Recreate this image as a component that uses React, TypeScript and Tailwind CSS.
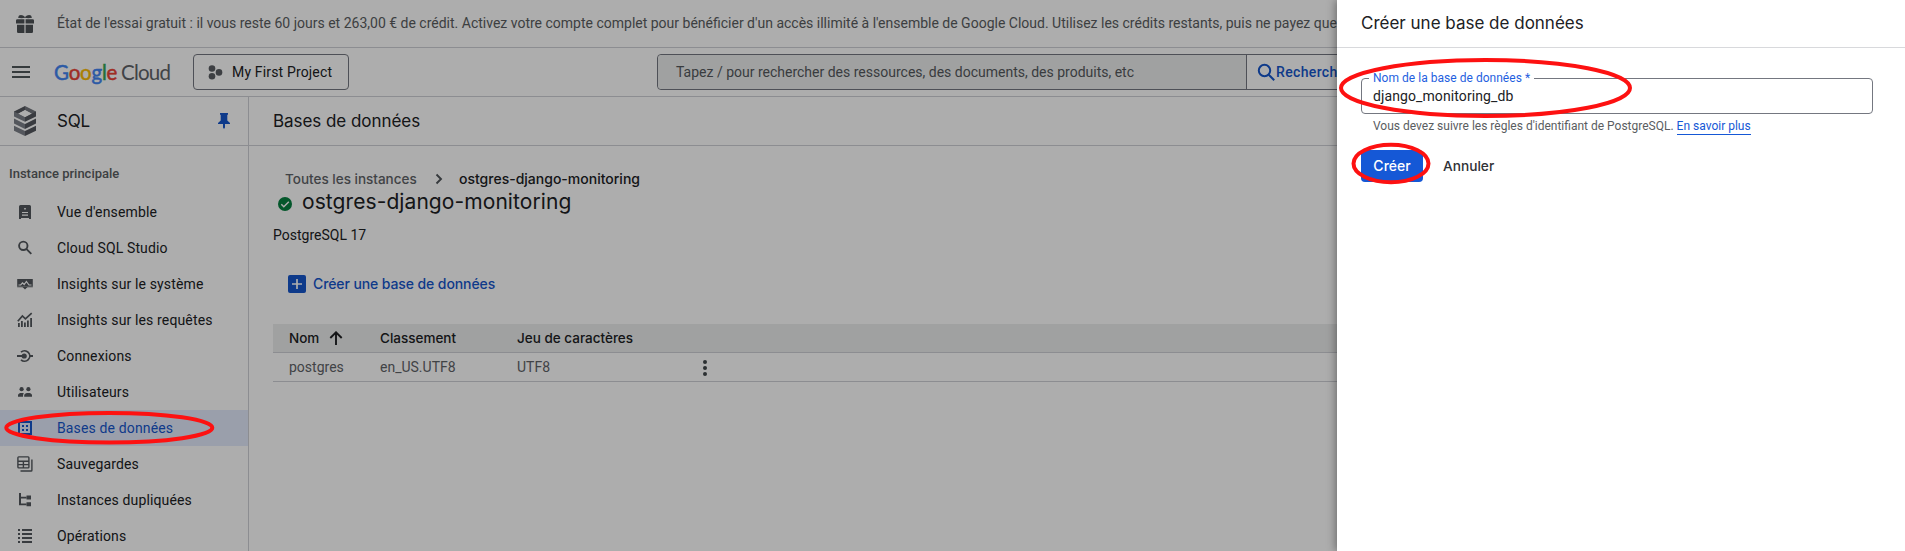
import type { ReactNode } from "react";

const Icon = ({ children, size = 16, box = 16, className = "" }: { children: ReactNode; size?: number; box?: number; className?: string }) => (
  <svg width={size} height={size} viewBox={`0 0 ${box} ${box}`} fill="currentColor" className={`shrink-0 ${className}`}>
    {children}
  </svg>
);

const navItems: { label: string; icon: ReactNode; active?: boolean }[] = [
  {
    label: "Vue d'ensemble",
    icon: (
      <>
        <path d="M3.500 1h9A1.500 1.500 0 0 1 14 2.500V15h-2v-1H4v1H2V2.500A1.500 1.500 0 0 1 3.500 1z" />
        <path fill="#fff" d="M7.200 4h1.600v1.600H7.200zM5 8h6v1.100H5zM5 10.600h6v1.100H5z" />
      </>
    ),
  },
  {
    label: "Cloud SQL Studio",
    icon: (
      <g fill="none" stroke="currentColor" strokeWidth="1.900">
        <circle cx="6.300" cy="5.800" r="4.200" />
        <path d="m9.300 8.800 5 5" />
      </g>
    ),
  },
  {
    label: "Insights sur le système",
    icon: (
      <>
        <path d="M.2 3h15.600v7.600H.2z" />
        <path d="M5.500 11h5L8 13.500z" />
        <path d="M.2 10.200h15.600v1.300H.2z" fillOpacity=".5" />
        <path fill="none" stroke="#fff" strokeWidth="1.200" d="M1.500 9h2.200L5.500 6.800l1.700 1.700L9.400 5.500 12 9h2.500" />
      </>
    ),
  },
  {
    label: "Insights sur les requêtes",
    icon: (
      <>
        <path d="M1 11h1.800v4H1zM4 9h1.800v6H4zM7 10.500h1.800V15H7zM10 8.500h1.800V15H10zM13.200 6H15v9h-1.800z" />
        <path fill="none" stroke="currentColor" strokeWidth="1.700" d="M.8 9.200 5.400 4l3 2.800 6.300-5.600" />
      </>
    ),
  },
  {
    label: "Connexions",
    icon: (
      <>
        <circle cx="7.200" cy="8" r="2.600" />
        <path d="M0 7.100h6v1.900H0zM12.500 7.100H16v1.900h-3.500z" />
        <path fill="none" stroke="currentColor" strokeWidth="1.700" d="M4 4.200a5.200 5.200 0 1 1 0 7.600" />
      </>
    ),
  },
  {
    label: "Utilisateurs",
    icon: (
      <>
        <circle cx="4.600" cy="5.200" r="2.100" />
        <circle cx="11.400" cy="5.200" r="2.100" />
        <path d="M1 12.700v-1.500C1 9.600 2.800 9 4.600 9c.9 0 1.700.1 2.400.5-.6.500-1 1.100-1 2v1.200zM7.200 12.700v-1.500C7.200 9.600 9.500 9 11.300 9S15 9.600 15 11.200v1.500z" />
      </>
    ),
  },
  {
    label: "Bases de données",
    active: true,
    icon: (
      <>
        <path fillRule="evenodd" d="M1 1h14v14H1zM3 3v10h10V3z" />
        <path d="M5 5h2v2H5zM9 5h2v2H9zM5 9h2v2H5zM9 9h2v2H9z" />
      </>
    ),
  },
  {
    label: "Sauvegardes",
    icon: (
      <g fill="none" stroke="currentColor" strokeWidth="1.400">
        <rect x=".9" y=".9" width="11" height="11" rx=".8" />
        <path d="M1 5.200h11M6.400 5.200V12M1 8.600h11" />
        <path d="M14.900 3.500v10.700q0 .8-.8.800H3.500" />
      </g>
    ),
  },
  {
    label: "Instances dupliquées",
    icon: (
      <>
        <path d="M2 1h2v3.700h5.500v1.800H4v5h5.500v1.800H2z" />
        <path d="M9.500 3.500H14v4H9.500zM9.500 10.300H14v4H9.500z" />
      </>
    ),
  },
  {
    label: "Opérations",
    icon: <path d="M1 1h2v2H1zM5 1h10v2H5zM1 5h2v2H1zM5 5h10v2H5zM1 9h2v2H1zM5 9h10v2H5zM1 13h2v2H1zM5 13h10v2H5z" />,
  },
];

function TopBars() {
  return (
    <>
      <div className="flex h-12 items-center border-b border-[#cfd0d6] text-[#5a5d61]">
        <Icon size={18} box={18} className="ml-4 text-[#4d5256]">
          <path d="M1.500 4.200h15q1.500 0 1.500 1.300V8.600h-8.400V4.200H8.400V8.600H0V5.500q0-1.300 1.500-1.300z" />
          <path d="M1 9.800h7.400V18H2.200Q1 18 1 16.800zM9.600 9.800H17v7q0 1.200-1.200 1.200H9.600z" />
          <path d="M3 .4q3.500-1 6 1.500Q11.500-.6 15 .4l1 2.300q-3.500.8-7 .1-3.500.7-7-.1z" />
        </Icon>
        <div className="ml-[23px] whitespace-nowrap pb-0.5 text-sm">
          État de l'essai gratuit : il vous reste 60 jours et 263,00 € de crédit. Activez votre compte complet pour bénéficier d'un accès illimité à l'ensemble de Google Cloud. Utilisez les crédits restants, puis ne payez que
        </div>
      </div>
      <div className="flex h-[49px] items-center border-b border-[#cfd0d6]">
        <div className="ml-3 flex w-[18px] flex-col gap-[3px]">
          <div className="h-0.5 bg-[#50585a]" />
          <div className="h-0.5 bg-[#50585a]" />
          <div className="h-0.5 bg-[#50585a]" />
        </div>
        <div className="ml-6 flex w-[139px] items-baseline font-['Lato',sans-serif] text-[20.5px] leading-6">
          <span className="w-[67px] tracking-[-0.2px] [-webkit-text-stroke:0.5px]">
            <span className="text-[#4285f4]">G</span>
            <span className="text-[#ea4335]">o</span>
            <span className="text-[#fbbc04]">o</span>
            <span className="text-[#4285f4]">g</span>
            <span className="text-[#34a853]">l</span>
            <span className="text-[#ea4335]">e</span>
          </span>
          <span className="tracking-[-0.8px] text-[#5f6368]">Cloud</span>
        </div>
        <div className="flex h-9 w-[156px] items-center rounded border border-[#747780]">
          <Icon size={15} box={15} className="ml-3.5 text-[#5a5e63]">
            <circle cx="4" cy="3.500" r="3.300" />
            <circle cx="4" cy="11.300" r="3.300" />
            <circle cx="11" cy="7.400" r="3.300" />
          </Icon>
          <span className="ml-[9px] text-sm tracking-[0.16px] text-[#202124]">My First Project</span>
        </div>
        <div className="ml-[308px] flex h-9 w-[720px] rounded border border-[#747780]">
          <div className="flex w-[588px] items-center rounded-l bg-[#eceeed] pl-[18px] text-sm text-[#55595d]">
            Tapez / pour rechercher des ressources, des documents, des produits, etc
          </div>
          <div className="flex items-center border-l border-[#747780] pl-2.5 text-sm font-medium text-[#1656cc]">
            <svg width="19" height="19" viewBox="0 0 19 19" fill="none" stroke="currentColor" strokeWidth="2">
              <circle cx="7.500" cy="7.500" r="5.700" />
              <path d="m11.700 11.700 5.500 5.500" />
            </svg>
            <span className="tracking-[0.35px]">Rechercher</span>
          </div>
        </div>
      </div>
    </>
  );
}

function Sidebar() {
  return (
    <div className="w-[249px] shrink-0 border-r border-[#cfd0d6]">
      <div className="flex h-[49px] items-center border-b border-[#cfd0d6]">
        <svg width="22" height="30" viewBox="0 0 22 30" className="ml-3.5 shrink-0">
          <path fill="#54585f" d="M11 0 0 5.500v4.200l11-5.400z" />
          <path fill="#73777e" d="M11 0l11 5.500v4.200L11 4.300z" />
          <path fill="#7d8189" d="M0 5.500v5l11 5.300v-4.900z" />
          <path fill="#54585f" d="M22 5.500v5l-11 5.300v-4.900z" />
          <path fill="#fff" d="m11 4 6.200 3.600L11 11 4.800 7.600z" />
          <path fill="#7d8189" d="M0 12.600v5L11 23v-5zM0 19.700v5L11 30v-5z" />
          <path fill="#54585f" d="M22 12.600v5L11 23v-5zM22 19.700v5L11 30v-5z" />
        </svg>
        <span className="ml-[21px] pt-0.5 font-['Inter',sans-serif] text-[17px] tracking-[-0.2px] text-[#202124]">SQL</span>
        <svg width="12" height="16" viewBox="0 0 12 16" fill="#1656cc" className="ml-auto mr-[18px]">
          <path d="M2 0h8v1.500l-.7.500v5.500L12 10v1H7v3.500L6 16l-1-1.500V11H0v-1l2.700-2.500V2L2 1.500z" />
        </svg>
      </div>
      <div className="mt-[18px] h-[30px] pl-[9px] text-[13px] font-medium leading-5 text-[#5a5d61]">Instance principale</div>
      {navItems.map((item) => (
        <div
          key={item.label}
          className={item.active ? "flex h-9 items-center bg-[#e3ebfd] text-[#1656cc]" : "flex h-9 items-center text-[#202124]"}
        >
          <Icon className={item.active ? "ml-[17px] text-[#1656cc]" : "ml-[17px] text-[#53585d]"}>{item.icon}</Icon>
          <span className="ml-6 text-sm tracking-[0.14px]">{item.label}</span>
        </div>
      ))}
    </div>
  );
}

function Main() {
  return (
    <div className="min-w-0 grow">
      <div className="flex h-[49px] items-center border-b border-[#cfd0d6] pl-6 pt-0.5 font-['Inter',sans-serif] text-[17px] tracking-[-0.05px] text-[#202124]">
        Bases de données
      </div>
      <div className="pl-6 font-['Inter',sans-serif] text-[#202124]">
        <div className="mt-[23px] flex h-5 items-center pl-3 text-[13.5px] font-medium">
          <span className="w-[145px] text-[#5f6368]">Toutes les instances</span>
          <svg width="16" height="16" viewBox="0 0 16 16" fill="none" stroke="#50555a" strokeWidth="1.900">
            <path d="m6.500 3.500 4.500 4.500-4.500 4.500" />
          </svg>
          <span className="ml-[13px] text-sm">ostgres-django-monitoring</span>
        </div>
        <div className="flex h-7 items-center pl-[5px]">
          <svg width="14" height="14" viewBox="0 0 14 14" className="mt-0.5">
            <circle cx="7" cy="7" r="7" fill="#068040" />
            <path d="m3.300 7.300 2.500 2.500 5-5" fill="none" stroke="#fff" strokeWidth="1.500" />
          </svg>
          <span className="ml-2.5 pb-0.5 text-[21px] leading-7 tracking-[0.08px]">ostgres-django-monitoring</span>
        </div>
        <div className="mt-2 font-['Roboto',sans-serif] text-sm leading-5">PostgreSQL 17</div>
        <div className="mt-7 flex h-[22px] items-center pl-[15px] text-sm font-medium tracking-[-0.1px] text-[#1656cc]">
          <svg width="18" height="18" viewBox="0 0 18 18">
            <rect width="18" height="18" rx="2" fill="#1656cc" />
            <path d="M9 4v10M4 9h10" stroke="#fff" strokeWidth="1.700" />
          </svg>
          <span className="ml-[7px]">Créer une base de données</span>
        </div>
        <div className="mt-[29px] flex h-[29px] items-center border-b border-[#cfd0d6] bg-[#eceeed] pl-4 text-[13.5px] font-medium">
          <div className="flex w-[91px] items-center">
            Nom
            <svg width="14" height="14" viewBox="0 0 14 14" fill="none" stroke="#202124" strokeWidth="1.900" className="ml-2.5">
              <path d="M7 14V1.500M1.300 7 7 1.300 12.700 7" />
            </svg>
          </div>
          <div className="w-[137px]">Classement</div>
          <div>Jeu de caractères</div>
        </div>
        <div className="flex h-[29px] items-center border-b border-[#cfd0d6] pl-4 font-['Roboto',sans-serif] text-sm text-[#5f6368]">
          <div className="w-[91px]">postgres</div>
          <div className="w-[137px]">en_US.UTF8</div>
          <div className="w-[180px]">UTF8</div>
          <svg width="16" height="18" viewBox="0 0 16 18" fill="#42474b" className="mt-0.5">
            <circle cx="8" cy="3" r="2" />
            <circle cx="8" cy="9" r="2" />
            <circle cx="8" cy="15" r="2" />
          </svg>
        </div>
      </div>
    </div>
  );
}

function Drawer() {
  return (
    <div className="absolute inset-y-0 right-0 w-[568px] bg-white shadow-[-2px_0_8px_rgba(0,0,0,0.35)]">
      <div className="flex h-12 items-center border-b border-[#d8d9dc] pl-6 font-['Inter',sans-serif] text-[17px] text-[#202124]">
        Créer une base de données
      </div>
      <div className="pl-6 pr-8">
        <fieldset className="mt-6 h-[42px] rounded border border-[#747780] px-[7px]">
          <legend className="h-3 px-1 text-xs leading-[12px] tracking-[0.03px] text-[#1f5fe0]">Nom de la base de données *</legend>
          <div className="px-1 pt-0.5 text-sm leading-5 tracking-[0.1px] text-[#202124]">django_monitoring_db</div>
        </fieldset>
        <div className="ml-3 mt-0.5 h-5 text-xs leading-5 text-[#5a5d61]">
          Vous devez suivre les règles d'identifiant de PostgreSQL.{" "}
          <span className="inline-block border-b border-[#1558d6] leading-[15px] text-[#1558d6]">En savoir plus</span>
        </div>
        <div className="mt-3.5 flex h-8 items-center font-['Inter',sans-serif] text-sm font-medium">
          <div className="flex h-8 w-[62px] items-center justify-center rounded bg-[#1558d6] text-white">Créer</div>
          <span className="ml-5 pt-px text-[13.7px] text-[#303236]">Annuler</span>
        </div>
      </div>
    </div>
  );
}

export default function App() {
  return (
    <div className="relative h-[551px] w-[1905px] overflow-hidden bg-white font-['Roboto',sans-serif]">
      <TopBars />
      <div className="flex h-[454px]">
        <Sidebar />
        <Main />
      </div>
      <div className="absolute inset-0 bg-black/32" />
      <Drawer />
      <svg className="absolute inset-0" width="1905" height="551" fill="none" stroke="#fd1111" strokeWidth="4">
        <ellipse cx="109.300" cy="427.700" rx="103" ry="14.800" />
        <ellipse cx="1485.500" cy="88" rx="144.500" ry="28" />
        <ellipse cx="1391" cy="163.500" rx="37.500" ry="18.800" />
      </svg>
    </div>
  );
}
